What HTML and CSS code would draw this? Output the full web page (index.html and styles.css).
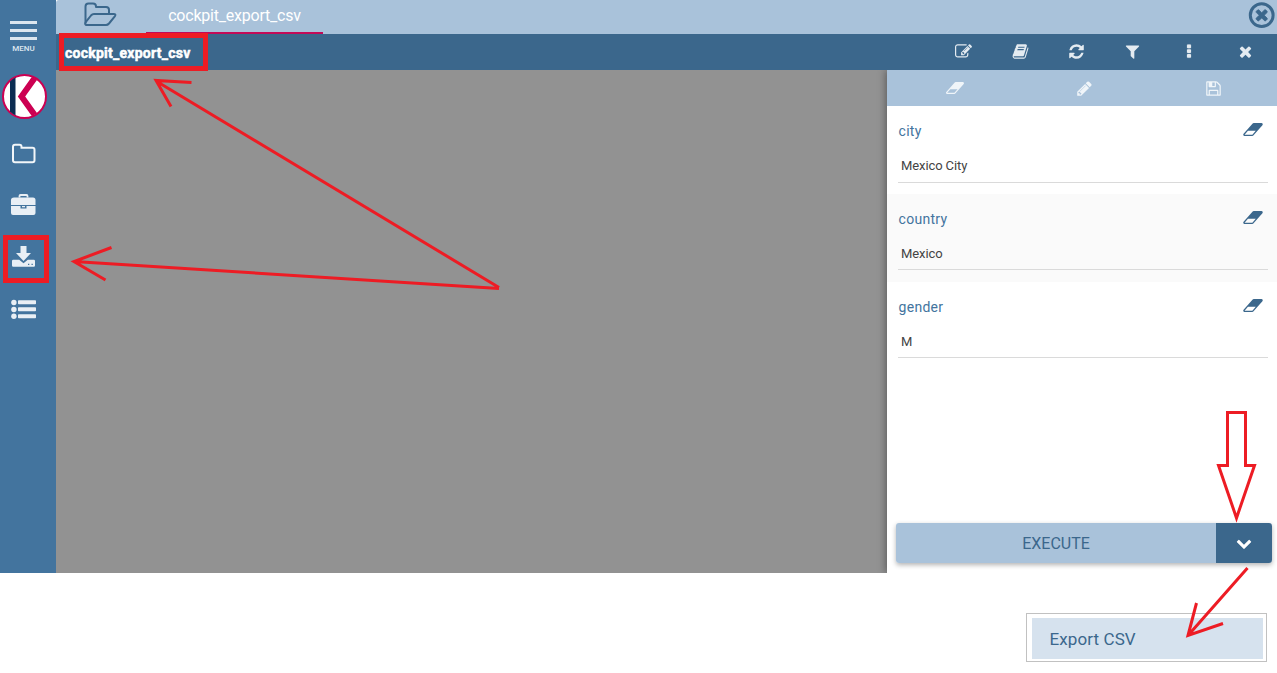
FILE: index.html
```html
<!DOCTYPE html>
<html lang="en">
<head>
<meta charset="utf-8">
<title>cockpit_export_csv</title>
<link rel="stylesheet" href="styles.css">
</head>
<body>
<svg class="symbols" aria-hidden="true">
  <symbol id="eraser" viewBox="-64 256 1920 1280"><path d="M832 1408l336-384h-768l-336 384h768zm1013-1077q15 34 9.500 71.500t-30.500 65.500l-896 1024q-38 44-96 44h-768q-38 0-69.500-20.500t-47.500-54.500q-15-34-9.500-71.500t30.500-65.500l896-1024q38-44 96-44h768q38 0 69.500 20.500t47.500 54.500z"/></symbol>
  <symbol id="times" viewBox="0 0 1792 1792"><path d="M1490 1322q0 40-28 68l-136 136q-28 28-68 28t-68-28l-294-294-294 294q-28 28-68 28t-68-28l-136-136q-28-28-28-68t28-68l294-294-294-294q-28-28-28-68t28-68l136-136q28-28 68-28t68 28l294 294 294-294q28-28 68-28t68 28l136 136q28 28 28 68t-28 68l-294 294 294 294q28 28 28 68z"/></symbol>
</svg>
<div class="app">
  <nav class="sidebar">
    <div class="menu">
      <svg width="27" height="19"><path d="M0 1.500h27M0 9.500h27M0 17.500h27" stroke="#dce6ef" stroke-width="3"/></svg>
      <span>MENU</span>
    </div>
    <svg class="logo" width="46" height="46" viewBox="0 0 46 46">
      <defs><clipPath id="disc"><circle cx="23.500" cy="23.500" r="21"/></clipPath></defs>
      <circle cx="23.500" cy="23.500" r="21.500" fill="#fff" stroke="#cc0052" stroke-width="2"/>
      <g clip-path="url(#disc)"><path d="M9 0h5.500v47H9z" fill="#0b2c52"/><path d="M38 -1L20.500 23.500l17.500 24.500" fill="none" stroke="#cc0052" stroke-width="6"/></g>
    </svg>
    <svg class="side-icon" width="26" height="24" viewBox="0 0 26 24"><path d="M2 5.700q0-2 2-2h4.500q2 0 2 2v1h11q2 0 2 2v10.500q0 2-2 2H4q-2 0-2-2z" fill="none" stroke="#f2f6f9" stroke-width="2"/></svg>
    <svg class="side-icon" width="26" height="24" viewBox="0 0 26 24" fill="#e9eff5"><path d="M8.500 4.500V3q0-1 1-1h6q1 0 1 1v1.500" fill="none" stroke="#e9eff5" stroke-width="1.800"/><path d="M3 4.500h19q2.500 0 2.500 2.500V12H0V7q0-2.500 3-2.500zM0 13h9.500v2.500h6V13h9v7q0 2-2 2H2q-2 0-2-2zM11 13h3v1.300h-3z"/></svg>
    <svg class="side-icon" width="26" height="24" viewBox="0 0 26 24" fill="#e9eff5"><path d="M9.500 1h6v7h4.500l-7.500 8L5 8h4.500z"/><path fill-rule="evenodd" d="M2.200 14.700h6l4.300 3.500 4.300-3.500h6q1.200 0 1.200 1.200v4.600q0 1.200-1.200 1.200H2.200Q1 21.700 1 20.500v-4.600q0-1.200 1.200-1.200zM17 18.700V20h1.300v-1.300zM20.500 18.700V20h1.300v-1.300z"/></svg>
    <svg class="side-icon" width="26" height="24" viewBox="0 0 26 24" fill="#e9eff5"><circle cx="2.900" cy="5.500" r="2.700"/><circle cx="2.900" cy="12.500" r="2.700"/><circle cx="2.900" cy="19.300" r="2.700"/><rect x="7" y="3.300" width="18" height="4" rx=".8"/><rect x="7" y="10.300" width="18" height="4" rx=".8"/><rect x="7" y="17.300" width="18" height="4" rx=".8"/></svg>
  </nav>

  <div class="main">
    <header class="tabs">
      <div class="folder-tab"><svg width="34" height="26" viewBox="0 0 34 26" fill="none" stroke="#3b678c" stroke-width="2" stroke-linejoin="round"><path d="M2.500 22.500V5.500q0-3 3-3h4.500q3 0 3 3v.5h10q3 0 3 3V13"/><path d="M3 24q-1.500-1-.3-2.800l5.300-6.700q1.300-1.500 3-1.500h19.500q3 0 1.300 2.300l-5.800 7.200q-1.300 1.500-3 1.500z"/></svg></div>
      <div class="tab">cockpit_export_csv</div>
      <svg class="close-all" width="28" height="28" viewBox="0 0 28 28" fill="#3b678c"><circle cx="13.700" cy="14.200" r="11.400" fill="none" stroke="#3b678c" stroke-width="3"/><use href="#times" x="5.200" y="5.200" width="17" height="17" stroke="#3b678c" stroke-width="80"/></svg>
    </header>
    <div class="document-bar">
      <h1>cockpit_export_csv</h1>
      <div class="actions">
        <span><svg class="icon" viewBox="0 0 1792 1792"><path d="M888 1184l116-116-152-152-116 116v56h96v96h56zm440-720q-16-16-33 1l-350 350q-17 17-1 33t33-1l350-350q17-17 1-33zm80 594v190q0 119-84.500 203.500t-203.500 84.500h-832q-119 0-203.500-84.500t-84.500-203.500v-832q0-119 84.500-203.500t203.500-84.500h832q63 0 117 25 15 7 18 23 3 17-9 29l-49 49q-14 14-32 8-23-6-45-6h-832q-66 0-113 47t-47 113v832q0 66 47 113t113 47h832q66 0 113-47t47-113v-126q0-13 9-22l64-64q15-15 35-7t20 29zm-96-738l288 288-672 672h-288v-288zm444 132l-92 92-288-288 92-92q28-28 68-28t68 28l152 152q28 28 28 68t-28 68z"/></svg></span>
        <span><svg class="icon" viewBox="0 0 1792 1792"><path d="M1703 478q40 57 18 129l-275 906q-19 64-76.500 107.500t-122.500 43.500h-923q-77 0-148.500-53.500t-99.500-131.500q-24-67-2-127 0-4 3-27t4-37q1-8-3-21.500t-3-19.500q2-11 8-21t16.500-23.500 16.500-23.500q23-38 45-91.500t30-91.500q3-10 .5-30t-.5-28q3-11 17-28t17-23q21-36 42-92t25-90q1-9-2.500-32t.5-28q4-13 22-30.500t22-22.500q19-26 42.500-84.500t27.500-96.500q1-8-3-25.500t-2-26.500q2-8 9-18t18-23 17-21q8-12 16.500-30.500t15-35 16-36 19.500-32 26.500-23.500 36-11.500 47.500 5.500l-1 3q38-9 51-9h761q74 0 114 56t18 130l-274 906q-36 119-71.500 153.500t-128.500 34.500h-869q-27 0-38 15-11 16-1 43 24 70 144 70h923q29 0 56-15.500t35-41.500l300-987q7-22 5-57 38 15 59 43zm-1064 2q-4 13 2 22.500t20 9.500h608q13 0 25.500-9.500t16.500-22.500l21-64q4-13-2-22.500t-20-9.500h-608q-13 0-25.500 9.500t-16.500 22.500zm-83 256q-4 13 2 22.500t20 9.500h608q13 0 25.500-9.500t16.500-22.500l21-64q4-13-2-22.500t-20-9.500h-608q-13 0-25.500 9.500t-16.500 22.500z"/></svg></span>
        <span><svg class="icon" viewBox="0 0 1792 1792"><path d="M1639 1056q0 5-1 7-64 268-268 434.500t-478 166.500q-146 0-282.500-55t-243.500-157l-129 129q-19 19-45 19t-45-19-19-45v-448q0-26 19-45t45-19h448q26 0 45 19t19 45-19 45l-137 137q71 66 161 102t187 36q134 0 250-65t186-179q11-17 53-117 8-23 30-23h192q13 0 22.500 9.500t9.500 22.500zm25-800v448q0 26-19 45t-45 19h-448q-26 0-45-19t-19-45 19-45l138-138q-148-137-349-137-134 0-250 65t-186 179q-11 17-53 117-8 23-30 23h-199q-13 0-22.500-9.500t-9.500-22.500v-7q65-268 270-434.500t480-166.500q146 0 284 55.500t245 156.500l130-129q19-19 45-19t45 19 19 45z"/></svg></span>
        <span><svg class="icon" viewBox="0 0 1792 1792"><path d="M1595 295q17 41-14 70l-493 493v742q0 42-39 59-13 5-25 5-27 0-45-19l-256-256q-19-19-19-45v-486l-493-493q-31-29-14-70 17-39 59-39h1280q42 0 59 39z"/></svg></span>
        <span><svg class="icon" viewBox="0 0 17 17"><rect x="6" y="1.500" width="4" height="3.700" rx=".8"/><rect x="6" y="6.300" width="4" height="3.700" rx=".8"/><rect x="6" y="11.100" width="4" height="3.700" rx=".8"/></svg></span>
        <span><svg class="icon"><use href="#times"/></svg></span>
      </div>
    </div>
    <div class="workspace">
      <aside class="panel">
        <div class="panel-tools">
          <span><svg class="eraser"><use href="#eraser"/></svg></span>
          <span><svg class="icon" viewBox="0 0 1792 1792"><path d="M491 1536l91-91-235-235-91 91v107h128v128h107zm523-928q0-22-22-22-10 0-17 7l-542 542q-7 7-7 17 0 22 22 22 10 0 17-7l542-542q7-7 7-17zm-54-192l416 416-832 832h-416v-416zm683 96q0 53-37 90l-166 166-416-416 166-165q36-38 90-38 53 0 91 38l235 234q37 39 37 91z"/></svg></span>
          <span><svg class="icon save" viewBox="0 0 1792 1792"><path d="M512 1536h768v-384h-768v384zm896 0h128v-896q0-14-10-38.500t-20-34.500l-281-281q-10-10-34-20t-39-10v416q0 40-28 68t-68 28h-576q-40 0-68-28t-28-68v-416h-128v1280h128v-416q0-40 28-68t68-28h832q40 0 68 28t28 68v416zm-384-928v-320q0-13-9.500-22.500t-22.500-9.500h-192q-13 0-22.500 9.500t-9.500 22.500v320q0 13 9.500 22.500t22.500 9.500h192q13 0 22.500-9.500t9.500-22.500zm640 32v928q0 40-28 68t-68 28h-1344q-40 0-68-28t-28-68v-1344q0-40 28-68t68-28h928q40 0 88 20t76 48l280 280q28 28 48 76t20 88z"/></svg></span>
        </div>
        <div class="field"><div class="label">city<svg class="eraser"><use href="#eraser"/></svg></div><div class="value">Mexico City</div></div>
        <div class="field shaded"><div class="label">country<svg class="eraser"><use href="#eraser"/></svg></div><div class="value">Mexico</div></div>
        <div class="field tight"><div class="label">gender<svg class="eraser"><use href="#eraser"/></svg></div><div class="value">M</div></div>
        <div class="execute">
          <div class="run">EXECUTE</div>
          <div class="more"><svg width="16" height="16" viewBox="0 0 1792 1792" fill="#fff"><path d="M1683 808l-742 741q-19 19-45 19t-45-19l-742-741q-19-19-19-45.500t19-45.500l166-165q19-19 45-19t45 19l531 531 531-531q19-19 45-19t45 19l166 165q19 19 19 45.500t-19 45.500z"/></svg></div>
        </div>
      </aside>
    </div>
  </div>
</div>
<div class="popup"><div class="option">Export CSV</div></div>

<svg class="annotations" viewBox="0 0 1277 673" fill="none" stroke="#ed1c24" stroke-width="3">
  <path d="M61.500 35.500h144v33h-144zM5.500 237.500h41v43h-41z" stroke-width="5"/>
  <path d="M499 287.500L156 81M191.500 82.500L156 80.500L171 106.500M499 288.500L74 261.500M111.500 247.500L74 261.500L105.500 280"/>
  <path d="M1227.500 412.500h18v53h9L1236.500 518l-18-52.500h9z"/>
  <path d="M1247.500 568L1188 635.500M1196.500 603L1188 635.500L1223 623.500"/>
</svg>
</body>
</html>
```
FILE: styles.css
```css
* { box-sizing: border-box; }
body { margin: 0; width: 1277px; height: 673px; overflow: hidden; position: relative; background: #fff; font-family: Roboto, sans-serif; }
svg { display: block; flex: none; }
.symbols { position: absolute; width: 0; height: 0; }
.app { display: flex; height: 573px; }
.sidebar { width: 56px; background: #43749e; display: flex; flex-direction: column; align-items: flex-start; }
.menu { width: 47px; height: 73px; padding-top: 21px; display: flex; flex-direction: column; align-items: center; color: #dce6ef; font-size: 8px; font-weight: 500; line-height: 10px; gap: 4px; }
.logo { margin: 0 0 22px 1px; overflow: visible; }
.side-icon { margin: 0 0 28px 11px; overflow: visible; }
.main { flex: 1; display: flex; flex-direction: column; }
.tabs { height: 34px; display: flex; background: #a9c2da; border-top-left-radius: 3px; }
.folder-tab { width: 90px; padding: 1px 0 0 27px; }
.tab { width: 177px; height: 34px; line-height: 31px; text-align: center; font-size: 16px; letter-spacing: -.22px; color: #fff; border-bottom: 2px solid #c30a57; }
.close-all { margin: 1px 1px 0 auto; }
.document-bar { height: 36px; background: #3b678c; display: flex; align-items: center; justify-content: space-between; }
.document-bar h1 { margin: 2px 0 0 9px; font-size: 14px; font-weight: 700; letter-spacing: .25px; color: #fff; -webkit-text-stroke: .5px #fff; }
.actions { display: flex; padding: 0 3.500px 2px 0; color: #e4ebf1; }
.actions span { width: 56.300px; display: flex; justify-content: center; }
.icon { width: 17px; height: 17px; fill: currentColor; }
.actions .icon { stroke: currentColor; stroke-width: .2px; }
.workspace { flex: 1; background: #929292; display: flex; justify-content: flex-end; overflow: hidden; }
.panel { width: 390px; background: #fff; display: flex; flex-direction: column; box-shadow: -1px 0 8px rgba(0,0,0,.4); }
.panel-tools { height: 36px; background: #a9c2da; color: #f0f5f9; display: flex; padding-left: 4px; }
.panel-tools span { flex: 1; display: flex; align-items: center; justify-content: center; }
.panel-tools .save { margin-left: 2px; }
.eraser { width: 20px; height: 13px; fill: #3b678c; }
.panel-tools .eraser { width: 18px; height: 12px; fill: currentColor; }
.field { height: 88px; padding: 15px 9px 11px 11px; display: flex; flex-direction: column; }
.shaded { background: #fafafa; }
.shaded, .tight { padding-bottom: 12px; }
.label { display: flex; justify-content: space-between; height: 20px; line-height: 20px; padding: 0 5px 0 .5px; font-size: 14px; letter-spacing: .3px; color: #43749e; }
.label .eraser { margin-top: 2px; }
.value { flex: 1; padding: 15px 3px 0; font-size: 13px; letter-spacing: -.1px; line-height: 20px; color: #444; border-bottom: 1px solid #dadada; }
.execute { height: 40px; margin: auto 5px 10px 9px; display: flex; border-radius: 3px; overflow: hidden; box-shadow: 0 2px 5px rgba(0,0,0,.3); }
.run { flex: 1; background: #a9c2da; color: #3b678c; font-size: 16px; line-height: 41px; text-align: center; }
.more { width: 56px; background: #3b678c; display: flex; align-items: center; justify-content: center; }
.popup { width: 241px; height: 49px; margin: 40px 10px 0 auto; border: 1px solid #c1c1c1; padding: 4px 3px 2px 5px; }
.option { height: 41px; background: #d6e2ee; color: #3b678c; font-size: 17px; letter-spacing: .1px; line-height: 43px; padding-left: 17.500px; }
.annotations { position: absolute; left: 0; top: 0; width: 1277px; height: 673px; pointer-events: none; }
```
